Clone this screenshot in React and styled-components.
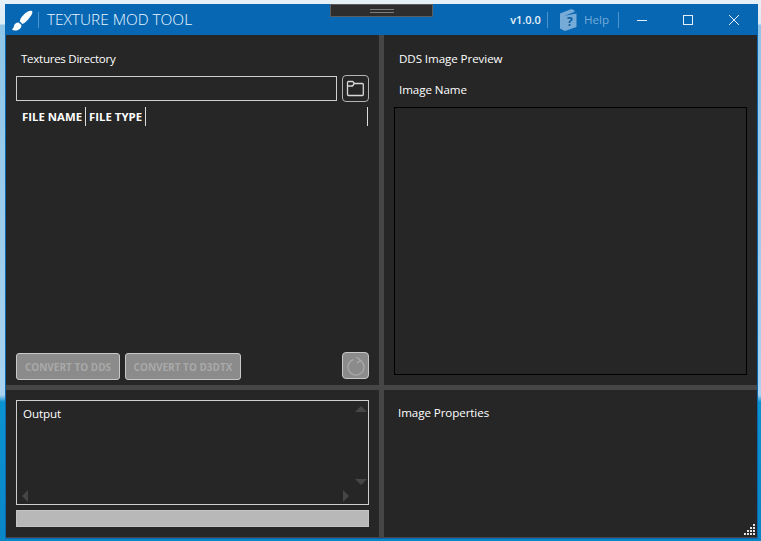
import React from "react";
import styled, { createGlobalStyle } from "styled-components";

const Global = createGlobalStyle`
  html, body { margin: 0; padding: 0; width: 761px; height: 541px; overflow: hidden; }
  body {
    background: linear-gradient(180deg, #e6f0f7 0, #dcebf5 24px, #8fc5e7 25px, #a9d3ee 395px, #0b93d1 402px, #0a86c6 541px);
    font-family: "Open Sans", "Noto Sans", sans-serif;
  }
  * { box-sizing: border-box; }
`;

const Window = styled.div`
  position: relative;
  width: 753px;
  height: 535px;
  margin: 4px 0 0 5px;
  background: #0767b3;
  border: solid #0767b3;
  border-width: 0 1px 1px 1px;
  display: flex;
  flex-direction: column;
`;

const TitleBar = styled.header`
  height: 31px;
  flex: none;
  display: flex;
  align-items: center;
  color: #fff;
`;

const Logo = styled.svg`
  width: 22px;
  height: 22px;
  margin-left: 5px;
  flex: none;
`;

const TitleSep = styled.span`
  width: 1px;
  height: 16px;
  flex: none;
  background: #4f93cb;
`;

const LogoSep = styled(TitleSep)`
  margin-left: 5px;
`;

const Title = styled.h1`
  margin: 0 0 0 8px;
  font: 300 15.4px/20px "Open Sans", sans-serif;
  color: #e9f6ff;
  white-space: nowrap;
`;

const Right = styled.div`
  margin-left: auto;
  display: flex;
  align-items: center;
  height: 100%;
`;

const Version = styled.span`
  font: 600 11px/16px "Open Sans", sans-serif;
  color: #e8f2fa;
  margin-right: 6px;
`;

const HelpIcon = styled.svg`
  width: 19px;
  height: 24px;
  margin-left: 11px;
  flex: none;
`;

const HelpText = styled.span`
  font: 400 11.6px/16px "Open Sans", sans-serif;
  color: #76abd8;
  margin: 1px 9px 0 6px;
`;

const WinButton = styled.button`
  width: 46px;
  height: 100%;
  padding: 0;
  border: 0;
  background: none;
  display: flex;
  align-items: center;
  justify-content: center;
  svg { display: block; }
`;

const Body = styled.main`
  flex: 1;
  display: grid;
  grid-template-columns: 373px 5px 373px;
  grid-template-rows: 350px 5px 147px;
  background: #464646;
  color: #fff;
`;

const Pane = styled.section`
  background: #262626;
  display: flex;
  flex-direction: column;
  min-width: 0;
  padding: ${(p) => p.$pad};
`;

const HSplit = styled.div`
  grid-column: 1 / -1;
`;

const VSplit = styled.div``;

const Label = styled.div`
  font: 400 11.6px/16px "Open Sans", sans-serif;
  letter-spacing: ${(p) => p.$ls || "-0.08px"};
  color: #fff;
  margin: ${(p) => p.$m || 0};
  white-space: nowrap;
`;

const PathRow = styled.div`
  display: flex;
  align-items: center;
  gap: 5px;
  margin-top: 8px;
  height: 27px;
`;

const PathInput = styled.div`
  flex: 1;
  height: 25px;
  border: 1px solid #cfcfcf;
`;

const IconButton = styled.button`
  width: 27px;
  height: 27px;
  flex: none;
  padding: 0;
  border: 1px solid ${(p) => (p.$disabled ? "#c8c8c8" : "#b4b4b4")};
  border-radius: 4px;
  background: ${(p) => (p.$disabled ? "#8b8b8b" : "transparent")};
  display: flex;
  align-items: center;
  justify-content: center;
`;

const HeaderRow = styled.div`
  display: flex;
  align-items: stretch;
  height: 21px;
  margin-top: 5px;
  padding-left: 6px;
`;

const HeaderCell = styled.div`
  font: 700 11.4px/19px "Open Sans", sans-serif;
  color: #fff;
  white-space: nowrap;
  width: ${(p) => p.$w}px;
  padding-left: ${(p) => p.$pl || 0}px;
  border-right: 1px solid #dcdcdc;
  height: 19px;
`;

const Spacer = styled.div`
  flex: 1;
`;

const HeaderEnd = styled.div`
  width: 1px;
  height: 19px;
  background: #dcdcdc;
  margin-right: 1px;
`;

const FileList = styled.div`
  flex: 1;
`;

const ActionRow = styled.div`
  display: flex;
  align-items: flex-start;
  gap: 5px;
  margin-bottom: 5px;
`;

const ConvertButton = styled.button`
  width: ${(p) => p.$w}px;
  height: 27px;
  margin-top: 1px;
  padding: 0;
  flex: none;
  border: 1px solid #c8c8c8;
  border-radius: 3px;
  background: #8b8b8b;
  color: #a9a9a9;
  font: 700 10px/1 "Open Sans", sans-serif;
  white-space: nowrap;
`;

const RefreshSlot = styled.div`
  margin-left: auto;
`;

const OutputBox = styled.div`
  position: relative;
  height: 105px;
  border: 1px solid #cfcfcf;
  padding: 5px 6px;
`;

const Arrow = styled.span`
  position: absolute;
  width: 0;
  height: 0;
  border-style: solid;
  border-color: transparent;
  ${(p) => p.$dir === "up" && "top: 5px; right: 1px; border-width: 0 6px 6px; border-bottom-color: #464646;"}
  ${(p) => p.$dir === "down" && "bottom: 19px; right: 1px; border-width: 6px 6px 0; border-top-color: #464646;"}
  ${(p) => p.$dir === "left" && "bottom: 2px; left: 5px; border-width: 6px 6px 6px 0; border-right-color: #464646;"}
  ${(p) => p.$dir === "right" && "bottom: 2px; right: 19px; border-width: 6px 0 6px 6px; border-left-color: #464646;"}
`;

const Progress = styled.div`
  height: 17px;
  margin-top: 5px;
  background: #b8b8b8;
  border: 1px solid #c4c4c4;
`;

const PreviewBox = styled.div`
  flex: none;
  height: 268px;
  margin-top: 9px;
  border: 1px solid #000;
`;

const Grip = styled.svg`
  position: absolute;
  right: 1px;
  bottom: 2px;
  width: 12px;
  height: 12px;
`;

const DockShell = styled.div`
  position: absolute;
  left: 330px;
  top: 4px;
  width: 103px;
  height: 13px;
  background: #2d2d2d;
  border: 1px solid #5c5c5c;
  display: flex;
  align-items: center;
  justify-content: center;
`;

const DockHandle = styled.span`
  width: 24px;
  height: 4px;
  border-top: 1px solid #7d7d7d;
  border-bottom: 1px solid #7d7d7d;
`;

const gripDots = [
  [9, 0],
  [6, 3], [9, 3],
  [3, 6], [6, 6], [9, 6],
  [0, 9], [3, 9], [6, 9], [9, 9],
];

export default function App() {
  return (
    <>
      <Global />
      <Window>
        <TitleBar>
          <Logo viewBox="0 0 22 22">
            <path d="M21 2C19 1 15 3 12 6.5 10 8.7 9 10.5 8.8 12.5L11.5 15C14 14 17 11 19 8 21 5.5 22 3 21 2z" fill="#fff" />
            <path d="M7.5 13.5 10.5 16C10.5 19 8 21.5 4.5 21.5 3 21.5 1.5 21 .8 20.2 2.3 19.8 2.6 18.5 3 17 3.4 15 5.2 13.6 7.5 13.5z" fill="#fff" />
          </Logo>
          <LogoSep />
          <Title>TEXTURE MOD TOOL</Title>
          <Right>
            <Version>v1.0.0</Version>
            <TitleSep />
            <HelpIcon viewBox="0 0 19 24">
              <path d="M1 5.5 12.5 1l3 1.5v1.6L5.5 7.7 17.5 5.5V19L6 23 1 20.5z" fill="#76abd8" />
              <text x="10.8" y="17.5" fontSize="12" fontWeight="700" fontFamily="Open Sans, sans-serif" fill="#0d5c9e" textAnchor="middle">?</text>
            </HelpIcon>
            <HelpText>Help</HelpText>
            <TitleSep />
            <WinButton>
              <svg width="10" height="10" viewBox="0 0 10 10"><path d="M0 5.5h10" stroke="#e6f0f8" strokeWidth="1" /></svg>
            </WinButton>
            <WinButton>
              <svg width="10" height="10" viewBox="0 0 10 10"><rect x=".5" y=".5" width="9" height="9" fill="none" stroke="#e6f0f8" /></svg>
            </WinButton>
            <WinButton>
              <svg width="10" height="10" viewBox="0 0 10 10"><path d="M0 0l10 10M10 0 0 10" stroke="#e6f0f8" strokeWidth="1" /></svg>
            </WinButton>
          </Right>
        </TitleBar>
        <Body>
          <Pane $pad="16px 10px 0 10px">
            <Label $m="0 0 0 5px" $ls="-0.3px">Textures Directory</Label>
            <PathRow>
              <PathInput />
              <IconButton>
                <svg width="19" height="17" viewBox="0 0 19 17" fill="none" stroke="#d8d8d8" strokeWidth="1.3">
                  <path d="M1.5 14.5v-12c0-.6.4-1 1-1h4.2l1.8 2h7.8c.6 0 1 .4 1 1v10c0 .6-.4 1-1 1H2.5c-.6 0-1-.4-1-1z" />
                  <path d="M1.5 6h5l1.8-2.5" />
                </svg>
              </IconButton>
            </PathRow>
            <HeaderRow>
              <HeaderCell $w={64}>FILE NAME</HeaderCell>
              <HeaderCell $w={60} $pl={3}>FILE TYPE</HeaderCell>
              <Spacer />
              <HeaderEnd />
            </HeaderRow>
            <FileList />
            <ActionRow>
              <ConvertButton $w={104}>CONVERT TO DDS</ConvertButton>
              <ConvertButton $w={116}>CONVERT TO D3DTX</ConvertButton>
              <RefreshSlot>
                <IconButton $disabled>
                  <svg width="20" height="20" viewBox="0 0 20 20" fill="none" stroke="#ababab" strokeWidth="1.2">
                    <path d="M14.4 4.4a8 8 0 1 1-6.9-.9" />
                    <path d="M10.6 1 14.4 4.4 10.8 7.2" />
                  </svg>
                </IconButton>
              </RefreshSlot>
            </ActionRow>
          </Pane>
          <VSplit />
          <Pane $pad="16px 10px 0 10px">
            <Label $m="0 0 0 5px">DDS Image Preview</Label>
            <Label $m="15px 0 0 5px">Image Name</Label>
            <PreviewBox />
          </Pane>
          <HSplit />
          <Pane $pad="10px 10px 0 10px">
            <OutputBox>
              <Label>Output</Label>
              <Arrow $dir="up" />
              <Arrow $dir="down" />
              <Arrow $dir="left" />
              <Arrow $dir="right" />
            </OutputBox>
            <Progress />
          </Pane>
          <VSplit />
          <Pane $pad="15px 10px 0 14px">
            <Label>Image Properties</Label>
          </Pane>
        </Body>
        <Grip viewBox="0 0 12 12">
          {gripDots.map(([x, y]) => (
            <rect key={`${x}-${y}`} x={x} y={y} width="2" height="2" fill="#e4e4e4" />
          ))}
        </Grip>
      </Window>
      <DockShell>
        <DockHandle />
      </DockShell>
    </>
  );
}
